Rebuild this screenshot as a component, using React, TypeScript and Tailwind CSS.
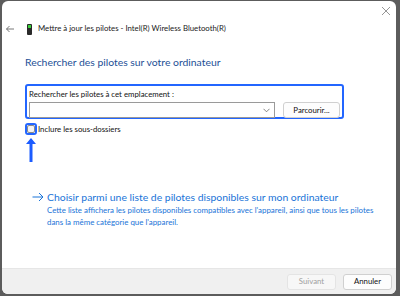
import React from 'react';

const font = { fontFamily: 'Lato, "Noto Sans", sans-serif' };

const App: React.FC = () => {
  return (
    <div className="w-[400px] h-[296px] bg-[#5c5c5c] pl-[2px] pr-[4px] pt-[1px] pb-[2px] overflow-hidden" style={font}>
      <div className="w-full h-full bg-white rounded-[6px] flex flex-col overflow-hidden">
        {/* title bar */}
        <div className="flex justify-end pr-[5px] pt-[5px] h-[16px]">
          <svg width="10" height="10" viewBox="0 0 10 10" className="text-[#8a8a8a]">
            <path d="M1 1 L9 9 M9 1 L1 9" stroke="currentColor" strokeWidth="0.9" />
          </svg>
        </div>
        <div className="flex items-center h-[24px] pl-[3px] text-[7.8px] text-[#1a1a1a] whitespace-nowrap">
          <svg width="10" height="10" viewBox="0 0 10 10" className="text-[#555]">
            <path d="M9 5 H1.5 M4.5 2 L1.5 5 L4.5 8" stroke="currentColor" strokeWidth="0.8" fill="none" />
          </svg>
          <div className="ml-[12px] mr-[6px] w-[5px] h-[11px] bg-[#2a2a2a] rounded-[1px] flex justify-center pt-[1px]">
            <div className="w-[3px] h-[3px] bg-[#3ad03a]" />
          </div>
          <span>Mettre à jour les pilotes - Intel(R) Wireless Bluetooth(R)</span>
        </div>

        {/* content */}
        <div className="flex-1 pl-[23px] pr-[10px]">
          <div className="mt-[16px] text-[10.4px] text-[#1d4f96] leading-none whitespace-nowrap">
            Rechercher des pilotes sur votre ordinateur
          </div>

          <div className="mt-[17px] w-[319px] h-[35px] border-2 border-[#2366ff] rounded-[3px] px-[2px] pt-[3px]">
            <div className="text-[7.8px] text-[#111] leading-[10px] whitespace-nowrap">
              Rechercher les pilotes à cet emplacement :
            </div>
            <div className="mt-[3px] flex items-center gap-[8px]">
              <div className="w-[246px] h-[16px] border border-[#9a9a9a] bg-white flex items-center justify-end pr-[4px]">
                <svg width="7" height="5" viewBox="0 0 7 5" className="text-[#666]">
                  <path d="M0.5 0.8 L3.5 3.8 L6.5 0.8" stroke="currentColor" strokeWidth="0.8" fill="none" />
                </svg>
              </div>
              <div className="w-[57px] h-[16px] border border-[#d0d0d0] rounded-[3px] bg-[#fdfdfd] flex items-center justify-center text-[7.8px] text-[#111]">
                Parcourir...
              </div>
            </div>
          </div>

          <div className="mt-[4px] flex items-center">
            <div className="w-[12px] h-[12px] border-2 border-[#2366ff] rounded-[3px] flex items-center justify-center">
              <div className="w-[8px] h-[8px] border border-[#8a8a8a] rounded-[2px] bg-[#f4f4f4]" />
            </div>
            <span className="ml-[1px] text-[7.8px] text-[#111]">Inclure les sous-dossiers</span>
          </div>

          <div className="ml-[1px] mt-[3px]">
            <svg width="10" height="24" viewBox="0 0 10 24">
              <path d="M5 0 L10 6 L6.5 6 L6.5 24 L3.5 24 L3.5 6 L0 6 Z" fill="#1c5cff" />
            </svg>
          </div>

          <div className="mt-[28px] flex items-start">
            <div className="w-[22px] pl-[7px] pt-[2px]">
              <svg width="12" height="10" viewBox="0 0 12 10" className="text-[#1a74d8]">
                <path d="M0.5 5 H11 M7 1 L11 5 L7 9" stroke="currentColor" strokeWidth="1" fill="none" />
              </svg>
            </div>
            <div className="text-[#1a74d8] whitespace-nowrap">
              <div className="text-[10.4px] leading-[14px]">
                Choisir parmi une liste de pilotes disponibles sur mon ordinateur
              </div>
              <div className="text-[7.9px] leading-[12px]">
                Cette liste affichera les pilotes disponibles compatibles avec l'appareil, ainsi que tous les pilotes
                <br />
                dans la même catégorie que l'appareil.
              </div>
            </div>
          </div>
        </div>

        {/* footer */}
        <div className="h-[26px] bg-[#f0f0f0] border-t border-[#e6e6e6] flex items-center justify-end gap-[7px] pr-[4px]">
          <div className="w-[49px] h-[16px] border border-[#e4e4e4] rounded-[3px] bg-[#f7f7f7] flex items-center justify-center text-[7.8px] text-[#a0a0a0]">
            Suivant
          </div>
          <div className="w-[49px] h-[16px] border border-[#d0d0d0] rounded-[3px] bg-[#fdfdfd] flex items-center justify-center text-[7.8px] text-[#111]">
            Annuler
          </div>
        </div>
      </div>
    </div>
  );
};

export default App;
